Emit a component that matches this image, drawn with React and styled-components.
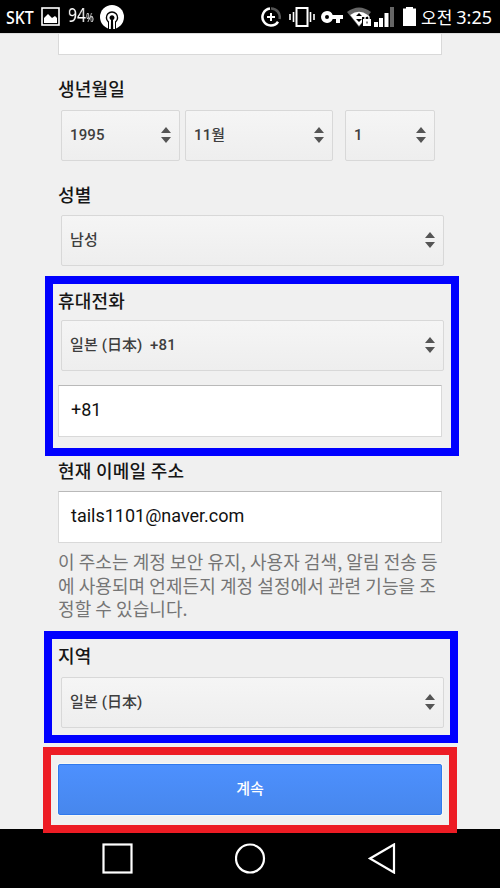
import React from "react";
import styled, { createGlobalStyle } from "styled-components";

const GlobalStyle = createGlobalStyle`
  * { box-sizing: border-box; }
  body { margin: 0; background: #f0f0f0; overflow: hidden; }
`;

const Screen = styled.div`
  width: 500px;
  height: 888px;
  display: flex;
  flex-direction: column;
  background: #f0f0f0;
  overflow: hidden;
  font-family: Roboto, "Noto Sans CJK KR", sans-serif;
`;

const StatusBar = styled.header`
  height: 33px;
  flex: none;
  display: flex;
  align-items: center;
  justify-content: space-between;
  padding: 0 8px 0 6px;
  background: #000;
  color: #fff;
`;

const StatusGroup = styled.div`
  display: flex;
  align-items: center;
  height: 33px;
`;

const StatusIcon = styled.svg`
  display: block;
  flex: none;
  margin-left: ${(p) => p.$gap || 0}px;
`;

const Carrier = styled.span`
  width: 35px;
  font: 500 17.5px/34px "Noto Sans", sans-serif;
  transform: scaleX(0.91);
  transform-origin: left;
`;

const Percent = styled.span`
  display: block;
  width: 32px;
  margin-left: 8px;
  font: 400 20px/34px "Noto Sans", sans-serif;
  white-space: nowrap;
  transform: scaleX(0.78);
  transform-origin: left;
  will-change: transform;

  small { font-size: 12px; }
`;

const Clock = styled.span`
  width: 71px;
  margin-left: 5px;
  display: flex;
  justify-content: space-between;
  font: 400 18px/34px "Noto Sans", "Noto Sans CJK KR", sans-serif;
  white-space: nowrap;
`;

const Meridiem = styled.span`
  font-family: "Noto Sans CJK KR", sans-serif;
  font-size: 17px;
`;

const Content = styled.main`
  flex: none;
  height: 796px;
  display: flex;
  flex-direction: column;
  border-top: 1px solid #dcdcdc;
`;

const Field = styled.section`
  flex: none;
  height: ${(p) => p.$height}px;
  padding: ${(p) => p.$padTop || 0}px 56px 0 58px;
`;

const Highlight = styled.section`
  flex: none;
  position: relative;
  width: 414px;
  height: ${(p) => p.$height}px;
  margin: ${(p) => p.$top || 0}px 0 0 ${(p) => p.$left}px;
  padding: ${(p) => p.$padTop || 0}px 0 0 ${(p) => 50 - p.$left}px;
  border: 8px solid ${(p) => p.$color};
`;

const Label = styled.h2`
  margin: 0;
  height: ${(p) => p.$height || 32}px;
  font: 500 18px/26px Roboto, "Noto Sans CJK KR", sans-serif;
  letter-spacing: 0.15px;
  color: #161616;
  white-space: nowrap;
`;

const SelectRow = styled.div`
  display: flex;
  margin-left: 3px;
`;

const SelectBox = styled.div`
  display: flex;
  align-items: center;
  justify-content: space-between;
  width: ${(p) => p.$width || 383}px;
  height: 51px;
  margin-right: ${(p) => p.$gap || 0}px;
  padding: 0 7px 1px 8px;
  border: 1px solid #d8d8d8;
  border-radius: 2px;
  background: linear-gradient(#f5f5f5, #eeeeee);
  font-weight: 500;
  font-size: 15px;
  line-height: 24px;
  letter-spacing: 0.1px;
  color: #3e3e3e;
  white-space: pre;
`;

const TextInput = styled.div`
  width: 384px;
  height: 52px;
  margin-top: ${(p) => p.$top || 0}px;
  padding: 0 12px 3px;
  border: 1px solid #d9d9d9;
  border-top-color: #b9b9b9;
  border-radius: 1px;
  background: #fff;
  font-size: 18px;
  line-height: 48px;
  color: #111;
`;

const ClippedInput = styled.div`
  height: 21px;
  width: 384px;
  border: 1px solid #d9d9d9;
  border-top: 0;
  background: #fff;
`;

const Help = styled.p`
  margin: 7px 0 0;
  font: 400 18px/23.5px "Noto Sans CJK KR", sans-serif;
  letter-spacing: 0.07px;
  color: #757575;
  white-space: nowrap;
`;

const Submit = styled.button`
  display: block;
  width: 384px;
  height: 51px;
  padding: 0 0 3px;
  border: 1px solid #3079ed;
  border-radius: 2px;
  background: linear-gradient(#4d90fe, #4787ed);
  box-shadow: 0 0 0 1px #f8f8f4;
  color: #fff;
  font: 500 15px/24px "Noto Sans CJK KR", sans-serif;
`;

const NavBar = styled.nav`
  flex: none;
  height: 59px;
  display: flex;
  justify-content: space-between;
  align-items: center;
  padding: 0 102px;
  background: #000;
`;

const Arrows = () => (
  <svg width="12" height="18" viewBox="0 0 12 18">
    <path d="M6 1 11 7H1z M1 11h10L6 17z" fill="#555" />
  </svg>
);

const Select = ({ children, ...rest }) => (
  <SelectBox {...rest}>
    <span>{children}</span>
    <Arrows />
  </SelectBox>
);

const Status = () => (
  <StatusBar>
    <StatusGroup>
      <Carrier>SKT</Carrier>
      <StatusIcon width="19" height="19" viewBox="0 0 19 19">
        <rect x="1" y="1" width="17" height="17" fill="none" stroke="#fff" strokeWidth="1.6" />
        <path d="M3 16v-5l4-4 4 4 3-2 2 2v5z" fill="#fff" />
      </StatusIcon>
      <Percent>94<small>%</small></Percent>
      <StatusIcon width="24" height="24" viewBox="0 0 24 24">
        <circle cx="12" cy="12" r="12" fill="#fff" />
        <path d="M8 24v-6.500a6.300 6.300 0 1 1 8 0V24z" fill="#000" />
        <path d="M9 24v-7.500a4.900 4.900 0 1 1 6 0V24z" fill="#fff" />
        <path d="M10.800 24 11 15a2.500 2.500 0 1 1 2 0l.2 9z" fill="#000" />
      </StatusIcon>
    </StatusGroup>
    <StatusGroup>
      <StatusIcon width="20" height="20" viewBox="0 0 20 20" fill="none">
        <path d="M10 1.5A8.5 8.5 0 0 1 18.5 12" stroke="#555" strokeWidth="2.5" />
        <path d="M9 1.5a8.5 8.5 0 1 0 8 13.2" stroke="#fff" strokeWidth="2.5" />
        <path d="M10 6v8M6 10h8" stroke="#fff" strokeWidth="2" />
      </StatusIcon>
      <StatusIcon $gap={8} width="26" height="20" viewBox="0 0 26 20" fill="none" stroke="#fff">
        <rect x="7.5" y="1" width="11" height="18" strokeWidth="2" />
        <path d="M1 7v6M4.5 5v10M21.5 5v10M25 7v6" strokeWidth="1.6" />
      </StatusIcon>
      <StatusIcon $gap={6} width="23" height="14" viewBox="0 0 23 14">
        <path fillRule="evenodd" fill="#fff" d="M6 1a6 6 0 1 0 5.7 8H15v4h4V9h3V5H11.7A6 6 0 0 0 6 1zm0 4a2 2 0 1 1 0 4 2 2 0 0 1 0-4z" />
      </StatusIcon>
      <StatusIcon $gap={3} width="25" height="20" viewBox="0 0 25 20">
        <path d="M0 5Q12 -4 24 5L12 20z" fill="#666" />
        <path d="M3.2 8Q12 1.5 20.8 8L12 19z" fill="#fff" />
        <path d="m9 9 3-3 3 3zM9 12h6l-3 3z" fill="#000" />
        <path d="M15 10h10v10H15z" fill="#000" />
        <path d="M16 12h8v7h-8z" fill="#fff" />
        <path d="M18 13v-2.2a2 2 0 0 1 4 0V13" fill="none" stroke="#fff" strokeWidth="1.4" />
        <path d="M19.5 14.5h1v2h-1z" fill="#000" />
      </StatusIcon>
      <StatusIcon $gap={2} width="20" height="20" viewBox="0 0 20 20">
        <path d="M0 15h4v5H0zM5 11h4v9H5zM10.500 6h4v14h-4z" fill="#fff" />
        <path d="M16 0h4v20h-4z" fill="#666" />
      </StatusIcon>
      <StatusIcon $gap={9} width="13" height="19" viewBox="0 0 13 19">
        <path d="M0 1.500h3V0h7v1.500h3V19H0z" fill="#fff" />
      </StatusIcon>
      <Clock><Meridiem>오전</Meridiem><span>3:25</span></Clock>
    </StatusGroup>
  </StatusBar>
);

export default function App() {
  return (
    <Screen>
      <GlobalStyle />
      <Status />
      <Content>
        <Field $height={43}><ClippedInput /></Field>
        <Field $height={106}>
          <Label $height={32.5}>생년월일</Label>
          <SelectRow>
            <Select $width={119} $gap={5}>1995</Select>
            <Select $width={148} $gap={12}>11월</Select>
            <Select $width={90}>1</Select>
          </SelectRow>
        </Field>
        <Field $height={93}>
          <Label>성별</Label>
          <SelectRow><Select>남성</Select></SelectRow>
        </Field>
        <Highlight $color="#0000ff" $left={45} $height={180} $padTop={5}>
          <Label $height={31}>휴대전화</Label>
          <SelectRow><Select>{"일본 (日本)  +81"}</Select></SelectRow>
          <TextInput $top={14}>+81</TextInput>
        </Highlight>
        <Field $height={175} $padTop={3}>
          <Label $height={32}>현재 이메일 주소</Label>
          <TextInput>tails1101@naver.com</TextInput>
          <Help>
            이 주소는 계정 보안 유지, 사용자 검색, 알림 전송 등<br />
            에 사용되며 언제든지 계정 설정에서 관련 기능을 조<br />
            정할 수 있습니다.
          </Help>
        </Field>
        <Highlight $color="#0000ff" $left={44} $height={112} $padTop={5}>
          <Label $height={33}>지역</Label>
          <SelectRow><Select>일본 (日本)</Select></SelectRow>
        </Highlight>
        <Highlight $color="#ed1c24" $left={43} $height={86} $top={4} $padTop={9}>
          <Submit type="button">계속</Submit>
        </Highlight>
      </Content>
      <NavBar>
        <svg width="31" height="31" viewBox="0 0 31 31" fill="none" stroke="#fff" strokeWidth="2.2">
          <rect x="1.500" y="1.500" width="28" height="28" />
        </svg>
        <svg width="31" height="31" viewBox="0 0 31 31" fill="none" stroke="#fff" strokeWidth="2.2">
          <circle cx="15" cy="15.500" r="14" />
        </svg>
        <svg width="31" height="31" viewBox="0 0 31 31" fill="none" stroke="#fff" strokeWidth="2.2">
          <path d="M3 15.500 27 1.500v28z" />
        </svg>
      </NavBar>
    </Screen>
  );
}
